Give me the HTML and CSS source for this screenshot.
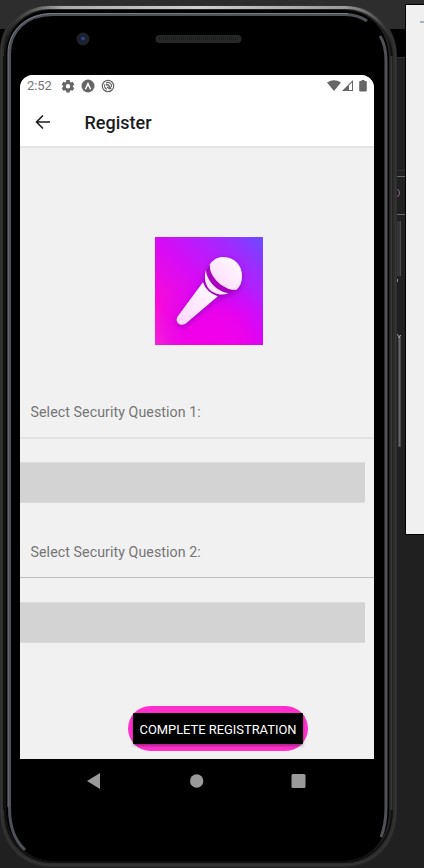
FILE: index.html
```html
<!DOCTYPE html>
<html lang="en">
<head>
<meta charset="utf-8">
<title>Register</title>
<link rel="stylesheet" href="styles.css">
</head>
<body>
<main class="desktop">
  <svg class="scene" viewBox="0 0 424 868" aria-hidden="true">
    <defs>
      <linearGradient id="topShine" x1="0" y1="0" x2="1" y2="0">
        <stop offset="0" stop-color="#252525"/><stop offset=".07" stop-color="#555"/><stop offset=".15" stop-color="#aaa"/><stop offset=".5" stop-color="#d0d0d0"/><stop offset=".88" stop-color="#999"/><stop offset="1" stop-color="#333"/>
      </linearGradient>
      <linearGradient id="fadeDown" x1="0" y1="0" x2="0" y2="1">
        <stop offset="0" stop-color="#fff"/><stop offset=".02" stop-color="#fff"/><stop offset=".06" stop-color="#000"/>
      </linearGradient>
      <mask id="topOnly"><rect width="424" height="868" fill="url(#fadeDown)"/></mask>
    </defs>
    <rect width="424" height="868" fill="#202020"/>
    <rect width="424" height="29" fill="#2d2d2d"/>
    <rect y="29" width="424" height="28" fill="#000"/>
    <path d="M396 57.5h10M396 170.5h10" stroke="#303030"/>
    <path d="M396 176.5h10M396 214.5h10" stroke="#666"/>
    <path d="M397.5 189q4 4 0 8" fill="none" stroke="#8b668f"/>
    <rect x="397" y="221" width="4" height="55" fill="#353535"/>
    <path d="M400.5 221v55" stroke="#4a4a4a"/>
    <rect x="397" y="279" width="1" height="3" fill="#888"/>
    <rect x="398" y="335" width="3" height="112" fill="#4a4a4a"/><path d="M399.5 337v109" stroke="#666"/>
    <path d="M397 334l3 4M401 335l-3 3" stroke="#999"/>
    <rect x="405.5" y="4.500" width="30" height="530" fill="#f0f0f0" stroke="#000"/>
    <path d="M420 22h4" stroke="#a4b5ba" stroke-width="2"/>
    <path d="M50 5H347C376 5 397 27 397 57V810C397 844 376 867 343 867H51C20 867 0 843 0 811V51C0 24 20 5 50 5Z" fill="#2c2c2c"/>
    <path d="M50 6H347C375 6 395.500 28 395.500 58V810C395.500 843 375 865 343 865H51C21 865 1.500 842 1.500 811V51C1.500 25 22 6 50 6Z" fill="none" stroke="#383838"/>
    <path d="M50 8H345C373 8 392 30 392 60V810C392 840 372 862 343 862H52C24 862 5 840 5 811V53C5 27 24 8 50 8Z" fill="#222" stroke="#101010" stroke-width="2"/>
    <path d="M4 53C4 27 24 7.500 50 7.500H345C372 7.500 392 29 392 55" fill="none" stroke="url(#topShine)" stroke-width="3" mask="url(#topOnly)"/>
    <path d="M50 10H343C370 10 389 30 389 60V810C389 840 370 861 343 861H52C26 861 6 839 6 810V53C6 29 26 10 50 10Z" fill="#000"/>
    <path d="M25 850C14 840 9.500 827 9.500 808V54C9.500 31 26 14.500 53 14.500H345Q359 15 367 21" fill="none" stroke="#4e5158" stroke-width="3"/>
    <path d="M8 807V54C8 30 27 13.500 53 13.500H348" fill="none" stroke="#777b83"/>
    <path d="M380 36Q386 45 386 61V807Q386 825 381 837" fill="none" stroke="#505156" stroke-width="3"/>
    <path d="M391.500 56V810" stroke="#373737" stroke-width="2"/>
    <path d="M3.500 56V810" stroke="#111"/>
    <circle cx="83" cy="39" r="6.500" fill="#202124"/>
    <circle cx="83" cy="39" r="3.700" fill="#17203e"/><circle cx="83" cy="38.500" r="1.800" fill="#30457e"/>
    <rect x="155.500" y="35" width="86" height="8" rx="4" fill="#262828"/>
    <path d="M159 38.500h79" stroke="#1a1d1b" stroke-width="3" stroke-dasharray="1 1"/>
  </svg>

  <section class="phone">
    <div class="screen">
      <div class="status">
        <span class="clock">2:52</span>
        <svg class="status-left" viewBox="0 0 54 14" fill="#666">
          <path fill-rule="evenodd" d="M5.400 1h3.200l.4 1.800 1 .6 1.700-.6 1.600 2.700-1.400 1.200v1.200l1.400 1.200-1.600 2.700-1.700-.6-1 .6-.4 1.700H5.400L5 11.800l-1-.6-1.700.6L.7 9.100l1.400-1.200V6.700L.7 5.500l1.600-2.700 1.700.6 1-.6ZM9.200 7.300a2.200 2.200 0 1 0-4.400 0 2.200 2.200 0 1 0 4.400 0Z"/>
          <circle cx="27" cy="7" r="6.500"/>
          <path d="M24.300 10.300C25.500 9 26.200 6.300 27 4.700c.8 1.600 1.500 4.300 2.700 5.600" fill="none" stroke="#fff" stroke-width="1.500"/>
          <g fill="none" stroke="#666"><circle cx="47" cy="7" r="5.700" stroke-width="1.200"/><path d="M46 10.300A3.400 3.400 0 0 1 44 5.300M45 4.200A3.400 3.400 0 0 1 50.300 8" stroke-width="1.100"/><path d="M45 6q2-.8 3 .8l2 3.200M46 8l3 2" stroke-width="1.500"/></g>
        </svg>
        <svg class="status-right" viewBox="0 0 42 14" fill="#666">
          <path d="M0 3.600Q7 -1.200 14 3.600L7 12Z"/>
          <path d="M15 12 26 1v11Z"/><path d="M22 6.500 25 3.500v7.500h-3Z" fill="#fff"/>
          <path d="M34.500 1h3v1h1.300q1 0 1 1v8.500q0 1-1 1h-5.600q-1 0-1-1V3q0-1 1-1h1.300Z"/>
        </svg>
      </div>
      <header class="appbar">
        <svg class="back" viewBox="0 0 16 16"><path d="M15 8H2M8 1.500 1.500 8 8 14.500" fill="none" stroke="#1c1c1e" stroke-width="1.600"/></svg>
        <h1>Register</h1>
      </header>
      <div class="content">
        <svg class="logo" viewBox="0 0 108 108">
          <defs>
            <linearGradient id="base" x1="0" y1="1" x2="1" y2="0"><stop offset="0" stop-color="#ff30c8"/><stop offset=".2" stop-color="#fa0ad7"/><stop offset=".5" stop-color="#d60cf5"/><stop offset=".8" stop-color="#a229ff"/><stop offset="1" stop-color="#684cff"/></linearGradient>
            <radialGradient id="magenta" cx=".55" cy="1" r=".65"><stop offset="0" stop-color="#f300ea"/><stop offset=".45" stop-color="#ee00ec" stop-opacity=".85"/><stop offset="1" stop-color="#d000ff" stop-opacity="0"/></radialGradient>
            <linearGradient id="mic" x1="0" y1="1" x2="1" y2="0"><stop offset="0" stop-color="#ffd5ff"/><stop offset="1" stop-color="#fff"/></linearGradient>
            <filter id="soft" x="-30%" y="-30%" width="160%" height="160%"><feDropShadow dx="0" dy="2" stdDeviation="3" flood-color="#6d00a0" flood-opacity=".6"/></filter>
          </defs>
          <rect width="108" height="108" fill="url(#base)"/><rect width="108" height="108" fill="url(#magenta)"/>
          <g filter="url(#soft)">
            <path d="M55 28L51 34Q48 42 48 46L62.500 59.500Q69 59 80 53Q62 48 55 28Z" fill="#aa00bd"/>
            <path d="M55 27.300C58 22.500 63 20 68.500 20C79 20 87 28.500 87 39Q87 47.500 81.500 52.700C69 54.500 53 39 55 27.300Z" fill="url(#mic)"/>
            <path d="M51 33C51.500 43.500 62 54.500 73.500 56.300C68 58.500 62 58 57 54.500C50 49.500 48.500 41 51 33Z" fill="#fce8ff"/>
            <path d="M48 45.300Q51 55.500 62.700 59.300L31 86.300C25 90.500 19 84.500 23 79Z" fill="url(#mic)"/>
          </g>
        </svg>
        <p class="question">Select Security Question 1:</p>
        <div class="rule rule-light"></div>
        <div class="answer"></div>
        <p class="question second">Select Security Question 2:</p>
        <div class="rule"></div>
        <div class="answer lower"></div>
        <div class="submit"><button type="button">COMPLETE REGISTRATION</button></div>
      </div>
    </div>
    <nav class="navigation">
      <svg viewBox="0 0 354 44" fill="#9a9a9a"><path d="M67 22 80 14v16Z"/><circle cx="176.700" cy="22" r="6.700"/><rect x="271.500" y="15" width="14" height="14" rx="1.500"/></svg>
    </nav>
  </section>
</main>
</body>
</html>
```

FILE: styles.css
```css
* { box-sizing: border-box; }
body { margin: 0; font-family: Roboto, sans-serif; }
.desktop { position: relative; width: 424px; height: 868px; overflow: hidden; }
.scene { position: absolute; inset: 0; width: 424px; height: 868px; }
.phone { position: relative; width: 397px; padding: 75px 23px 0 20px; }
.screen { width: 354px; height: 684px; overflow: hidden; border-radius: 13px 13px 0 0; background: #f1f1f1; }
.status { display: flex; align-items: center; height: 22px; padding: 0 6px 0 7px; background: #fff; }
.clock { width: 34px; color: #757575; font-size: 13px; font-weight: 400; line-height: 22px; letter-spacing: -.1px; }
.status-left { width: 54px; height: 14px; }
.status-right { width: 42px; height: 14px; margin-left: auto; margin-right: -1px; }
.appbar { display: flex; align-items: center; height: 50px; padding-left: 15px; background: #fff; border-bottom: 1px solid #e2e2e2; box-shadow: 0 1px 1px #e5e5e5; }
.back { width: 16px; height: 16px; }
h1 { margin: 2px 0 0 33.500px; color: #1c1c1e; font-size: 18px; font-weight: 500; line-height: 24px; }
.content { display: flex; flex-direction: column; align-items: flex-start; padding-top: 90px; }
.logo { width: 108px; height: 108px; margin-left: 135px; }
.question { margin: 57px 0 15px 10.500px; color: #757575; font-size: 14.200px; line-height: 20px; letter-spacing: .08px; white-space: nowrap; }
.rule { width: 100%; height: 1px; background: #bcbcbc; }
.rule-light { height: 2px; background: #e2e2e2; }
.answer { width: 345px; height: 41px; margin-top: 23px; background: #d3d3d3; border: solid #dcdcdc; border-width: 1px 0; }
.question.second { margin: 39px 0 15px 10.500px; }
.answer.lower { margin-top: 24px; }
.submit { display: flex; width: 180px; height: 45px; margin: 63px 0 0 108px; padding: 7px 5px; border-radius: 23px; background: #ff30cc; }
button { width: 170px; height: 31px; padding: 2px 0 0; border: 0; border-radius: 1px; background: #000; color: #fff; box-shadow: 0 2px 3px #0005; font: 400 12.900px/29px Roboto, sans-serif; white-space: nowrap; }
.navigation { height: 44px; }
.navigation svg { display: block; width: 354px; height: 44px; }
```
